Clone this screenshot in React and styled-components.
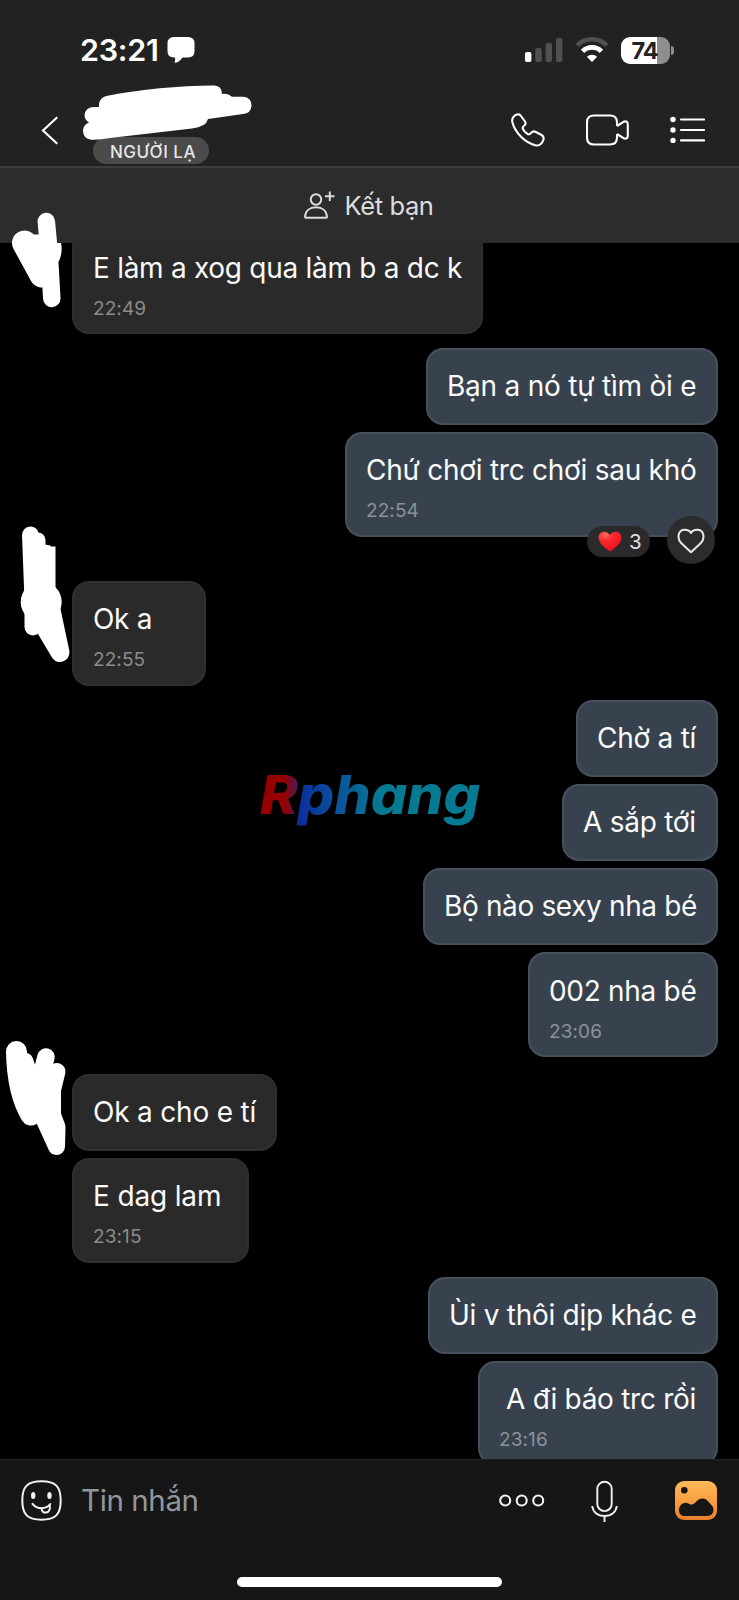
import React from "react";
import styled, { createGlobalStyle } from "styled-components";

const GlobalStyle = createGlobalStyle`
  * {
    box-sizing: border-box;
  }

  body {
    margin: 0;
    background: #000;
    font-family: Inter, "Liberation Sans", sans-serif;
  }

  svg {
    display: block;
    flex: none;
  }
`;

const Screen = styled.div`
  position: relative;
  display: flex;
  flex-direction: column;
  width: 739px;
  height: 1600px;
  overflow: hidden;
  background: #000;
`;

const Header = styled.header`
  display: flex;
  flex-direction: column;
  flex: none;
  height: 168px;
  background: #222;
  border-bottom: 2px solid #3e3e3e;
`;

const StatusBar = styled.div`
  display: flex;
  align-items: center;
  justify-content: space-between;
  height: 100px;
  padding: 0 65px 0 80px;
`;

const StatusGroup = styled.div`
  display: flex;
  align-items: center;
  gap: ${({ $gap }) => $gap}px;
`;

const Clock = styled.span`
  font-size: 30.5px;
  font-weight: 600;
  line-height: 36px;
  letter-spacing: -0.3px;
  color: #fff;
`;

const Battery = styled.div`
  display: flex;
  align-items: center;
  gap: 1px;
`;

const BatteryBody = styled.div`
  display: flex;
  align-items: center;
  justify-content: center;
  width: 49px;
  height: 27px;
  padding-right: 2px;
  border-radius: 9px;
  background: linear-gradient(90deg, #fff 74%, #8e8e8e 74%);
  color: #222;
  font-size: 23.5px;
  font-weight: 700;
  letter-spacing: -1px;
`;

const BatteryCap = styled.div`
  width: 3px;
  height: 9px;
  border-radius: 0 4px 4px 0;
  background: #8e8e8e;
`;

const TitleBar = styled.div`
  display: flex;
  align-items: flex-start;
  padding: 12px 34px 0 41px;
`;

const BackButton = styled.button`
  margin: 4px 0 0;
  padding: 0;
  border: 0;
  background: none;
`;

const StrangerTag = styled.span`
  width: 116px;
  height: 27px;
  margin: 25px 0 0 35px;
  padding: 0 0 0 17px;
  border-radius: 14px;
  background: #4b4b4b;
  color: #e6e6e6;
  font-size: 17px;
  font-weight: 500;
  line-height: 30px;
  letter-spacing: 0.5px;
  white-space: nowrap;
`;

const HeaderActions = styled.div`
  display: flex;
  align-items: center;
  gap: 41px;
  height: 36px;
  margin-left: auto;
`;

const FriendBanner = styled.div`
  display: flex;
  flex: none;
  align-items: center;
  justify-content: center;
  gap: 10px;
  height: 75px;
  padding-right: 2px;
  background: #2c2c2c;
  color: #dcdcdc;
  font-size: 25.5px;
  letter-spacing: -0.4px;
`;

const Thread = styled.main`
  display: flex;
  flex: 1;
  flex-direction: column;
  min-height: 0;
  overflow: hidden;
  padding: 0 21px 0 72px;
`;

const Group = styled.section`
  display: flex;
  flex: none;
  flex-direction: column;
  gap: 7.2px;
  align-items: ${({ $mine }) => ($mine ? "flex-end" : "flex-start")};
  margin-top: ${({ $top }) => $top}px;
`;

const Bubble = styled.article`
  position: relative;
  flex: none;
  width: ${({ $width }) => $width}px;
  height: ${({ $timed }) => ($timed ? 104.6 : 77)}px;
  padding: 19.2px 0 0 ${({ $indent }) => 19 + ($indent || 0)}px;
  border: 2px solid ${({ $mine }) => ($mine ? "#47515d" : "#2f2f2f")};
  border-radius: 17px;
  background: ${({ $mine }) => ($mine ? "#37424e" : "#2a2a2a")};
`;

const Message = styled.p`
  margin: 0;
  color: #fafafa;
  font-size: 28px;
  line-height: 34px;
  letter-spacing: ${({ $track }) => $track || 0}px;
  white-space: nowrap;
`;

const Time = styled.time`
  display: block;
  margin: 12px 0 0 ${({ $indent }) => -($indent || 0)}px;
  color: ${({ $mine }) => ($mine ? "#8b929b" : "#8c8c8c")};
  font-size: 19px;
  line-height: 24px;
  letter-spacing: 0.1px;
`;

const Reactions = styled.div`
  position: absolute;
  right: 1px;
  bottom: -29px;
  display: flex;
  align-items: center;
  gap: 17px;
`;

const ReactionCount = styled.div`
  display: flex;
  align-items: center;
  gap: 7px;
  width: 63px;
  height: 31px;
  margin-top: 4px;
  padding-left: 11px;
  border-radius: 16px;
  background: #2a2a2a;
  color: #e0e0e0;
  font-size: 20.5px;
`;

const ReactButton = styled.button`
  display: flex;
  align-items: center;
  justify-content: center;
  width: 48px;
  height: 48px;
  padding: 3px 0 0;
  border: 0;
  border-radius: 50%;
  background: #2c2c2c;
`;

const Composer = styled.footer`
  display: flex;
  flex: none;
  flex-direction: column;
  align-items: center;
  justify-content: space-between;
  height: 141px;
  padding-bottom: 13px;
  background: #161616;
  border-top: 1px solid #202020;
`;

const ComposerRow = styled.div`
  display: flex;
  align-items: center;
  width: 100%;
  height: 81px;
  padding: 0 22px 0 21px;
`;

const Placeholder = styled.span`
  margin: 0 0 2px 19px;
  color: #90989e;
  font-size: 29.5px;
  letter-spacing: -0.4px;
`;

const ComposerActions = styled.div`
  display: flex;
  align-items: center;
  margin-left: auto;
`;

const MicSlot = styled.span`
  margin: 0 57px 0 46px;
`;

const HomeIndicator = styled.div`
  width: 265px;
  height: 10px;
  border-radius: 5px;
  background: #fff;
`;

const Overlay = styled.svg`
  position: absolute;
  top: 0;
  left: 0;
  pointer-events: none;
`;

const groups = [
  {
    top: -13.4,
    items: [{ text: "E làm a xog qua làm b a dc k", width: 411, time: "22:49", track: -0.28 }],
  },
  {
    mine: true,
    top: 13.8,
    items: [
      { text: "Bạn a nó tự tìm òi e", width: 292, track: -0.22 },
      { text: "Chứ chơi trc chơi sau khó", width: 373, time: "22:54", reactions: 3, track: -0.25 },
    ],
  },
  { top: 44.4, items: [{ text: "Ok a", width: 134, time: "22:55", track: -0.3 }] },
  {
    mine: true,
    top: 14,
    items: [
      { text: "Chờ a tí", width: 142, track: -0.25 },
      { text: "A sắp tới", width: 156, track: -0.25 },
      { text: "Bộ nào sexy nha bé", width: 295, track: -0.36 },
      { text: "002 nha bé", width: 190, time: "23:06", track: -0.3 },
    ],
  },
  {
    top: 17,
    items: [
      { text: "Ok a cho e tí", width: 205, track: -0.2 },
      { text: "E dag lam", width: 177, time: "23:15", track: -0.15 },
    ],
  },
  {
    mine: true,
    top: 14,
    items: [
      { text: "Ùi v thôi dịp khác e", width: 290, track: -0.27 },
      { text: "A đi báo trc rồi", width: 240, time: "23:16", indent: 7, track: -0.28 },
    ],
  },
];

const SpeechIcon = () => (
  <svg width="28" height="28" viewBox="0 0 28 28" fill="#fff">
    <path d="M7 1h14q6.500 0 6.500 6.500v7.500q0 6.500-6.500 6.500h-5.500q-3 4.500-7 5.300-1.200 0-.8-1.200.8-1.800.3-4.100H7Q.5 21.500.5 15V7.500Q.5 1 7 1Z" />
  </svg>
);

const SignalIcon = () => (
  <svg width="38" height="26" viewBox="0 0 38 26" fill="#505050">
    <rect x="0" y="15" width="6.400" height="10" rx="1.800" fill="#fff" />
    <rect x="10.300" y="11" width="6.400" height="14" rx="1.800" />
    <rect x="20.600" y="6" width="6.400" height="19" rx="1.800" />
    <rect x="31" y="1" width="6.400" height="24" rx="1.800" />
  </svg>
);

const WifiIcon = () => (
  <svg width="34" height="26" viewBox="0 0 34 26" fill="none" strokeWidth="4.600">
    <path d="M2.200 8.400a21 21 0 0 1 29.600 0" stroke="#505050" />
    <path d="M7.600 14.300a13.200 13.200 0 0 1 18.800 0" stroke="#fff" />
    <path d="M17 25l-5.200-5.200a7.500 7.500 0 0 1 10.400 0Z" fill="#fff" />
  </svg>
);

const PhoneIcon = () => (
  <svg width="34" height="34" viewBox="0 0 34 34" fill="none" stroke="#fff" strokeWidth="2.100" strokeLinejoin="round">
    <path d="M2.300 4.200C4.300 1.600 7.600.300 9.600 2.500L14 8.500Q15.200 10.400 13.800 12Q11.600 13.600 11.600 15.200Q12.600 18.500 17.300 21.300Q18.900 21.600 20.400 19.700Q22 17.600 24.400 18.800L30.600 22Q33.200 23.700 32.500 26.500C30.800 31.500 27.700 33 24.300 32.300C14.500 29.500 4.300 20.500 1.400 9.300Q.700 6.300 2.300 4.200Z" />
  </svg>
);

const VideoIcon = () => (
  <svg width="43" height="32" viewBox="0 0 43 32" fill="none" stroke="#fff" strokeWidth="2.100" strokeLinejoin="round">
    <path d="M31 12V8.500q0-7-7-7H8q-7 0-7 7v15q0 7 7 7h16q7 0 7-7V20" />
    <path d="M31 12l6.500-4.200q4.300-1.600 4.300 2.800v10.800q0 4.400-4.300 2.800L31 20" />
  </svg>
);

const ListIcon = () => (
  <svg width="35" height="28" viewBox="0 0 35 28" fill="#fff">
    <circle cx="3" cy="3.500" r="2.700" />
    <circle cx="3" cy="14" r="2.700" />
    <circle cx="3" cy="24.400" r="2.700" />
    <path d="M11 3.500h23M11 14h23M11 24.400h23" stroke="#fff" strokeWidth="2.200" strokeLinecap="round" />
  </svg>
);

const AddFriendIcon = () => (
  <svg width="31" height="30" viewBox="0 0 31 30" fill="none" stroke="#dcdcdc" strokeWidth="2" strokeLinejoin="round">
    <circle cx="12" cy="8.500" r="5.200" />
    <path d="M1 25.700C1.500 19.500 6 16.300 12 16.300S22.500 19.500 23 25.700Q23 26.700 22 26.700H2Q1 26.700 1 25.700Z" />
    <path d="M21 5.300h9.500M25.800.500v9.600" />
  </svg>
);

const RedHeart = () => (
  <svg width="24" height="21" viewBox="0 0 24 21">
    <defs>
      <radialGradient id="heart" cx="0.3" cy="0.15" r="0.8">
        <stop offset="0" stopColor="#ff6a63" />
        <stop offset="0.4" stopColor="#fb2a2c" />
        <stop offset="1" stopColor="#ea1220" />
      </radialGradient>
    </defs>
    <path d="M12 20.500C8 18 .5 12.500.5 6.500C.5 3 3 .700 6.200.700C9 .700 11.200 2.200 12 4.500C12.800 2.200 15 .700 17.800.700C21 .700 23.500 3 23.500 6.500C23.500 12.500 16 18 12 20.500Z" fill="url(#heart)" />
  </svg>
);

const OutlineHeart = () => (
  <svg width="28" height="26" viewBox="0 0 28 26" fill="none" stroke="#e8e8e8" strokeWidth="2" strokeLinejoin="round">
    <path d="M14 24.200L4.400 15.200C-.5 10.300 1 1.800 7.700 1.800C10.700 1.800 13 3 14 5C15 3 17.300 1.800 20.300 1.800C27 1.800 28.500 10.300 23.600 15.200Z" />
  </svg>
);

const StickerIcon = () => (
  <svg width="41" height="41" viewBox="0 0 41 41" fill="none" stroke="#f2f2f2" strokeWidth="2" strokeLinecap="round">
    <path d="M20.500 1.300C34.500 1.300 39.700 6.500 39.700 20.500S34.500 39.700 20.500 39.700S1.300 34.500 1.300 20.500S6.500 1.300 20.500 1.300Z" />
    <ellipse cx="12.200" cy="15.500" rx="2.200" ry="3.600" fill="#f2f2f2" stroke="none" />
    <ellipse cx="28.500" cy="15.500" rx="2.200" ry="3.600" fill="#f2f2f2" stroke="none" />
    <path d="M11.500 23.800Q15 28.200 20.500 28.200Q26 28.200 29.300 24" />
    <path d="M20.600 28.200C20.800 31.500 22.500 32.800 25 32.600C28.300 32.200 29.500 29 28.600 25" />
  </svg>
);

const MoreIcon = () => (
  <svg width="46" height="14" viewBox="0 0 46 14" fill="none" stroke="#f2f2f2" strokeWidth="2.100">
    <circle cx="6.200" cy="6.500" r="5" />
    <circle cx="22.700" cy="6.500" r="5" />
    <circle cx="39.200" cy="6.500" r="5" />
  </svg>
);

const MicIcon = () => (
  <svg width="27" height="42" viewBox="0 0 27 42" fill="none" stroke="#f2f2f2" strokeWidth="1.900">
    <rect x="6.300" y="1.800" width="14.400" height="29.300" rx="7.200" />
    <path d="M1.200 26C1.800 32 6.500 36 13.500 36S25.200 32 25.800 26M13.500 36v6" />
  </svg>
);

const PhotoIcon = () => (
  <svg width="42" height="39" viewBox="0 0 42 39">
    <defs>
      <linearGradient id="photo" x1="0" y1="0" x2="0" y2="1">
        <stop offset="0" stopColor="#ffb95a" />
        <stop offset="0.6" stopColor="#f79a3c" />
        <stop offset="1" stopColor="#e87d2c" />
      </linearGradient>
    </defs>
    <rect width="42" height="39" rx="9" fill="url(#photo)" />
    <circle cx="9.300" cy="9.300" r="3.300" fill="#161616" />
    <path d="M4 29C4 25 7 22 10.500 21.800C13.500 21.800 14.500 24 17 23.600C20 23 22.500 17.500 27.500 17.500C31.500 17.500 33 20.500 35.500 23C37.500 25 38.500 26.500 38.500 28.500Q38.500 35 32 35H10Q4 35 4 29Z" fill="#161616" />
  </svg>
);

// thick round strokes that cover the name and the avatars
const Scribbles = () => (
  <Overlay width="739" height="1200" viewBox="0 0 739 1200" fill="none" stroke="#fff" strokeLinecap="round" strokeLinejoin="round">
    <path d="M99 107Q98 97 109 95.500C140 89.500 178 86 214 85.600Q222 86 222 94Q228 93 232 96.700H243Q251.500 97.500 251.500 105.500Q251 113.500 243 114L208 119Q206 127 192 128.500L110 138Q100 140 91 139.700Q83 138.500 83 130.500Q83.500 124.500 89 122.500Q84.500 120 84.500 115Q85.500 107.500 93 107Z" fill="#fff" stroke="none" />

    <path d="M46.300 221.500L49 250L51.800 298.500" strokeWidth="17.500" />
    <path d="M24.500 243L42 275" strokeWidth="25" />
    <path d="M30 235H46V270H36Z" fill="#fff" />
    <path d="M48 243H61Q63 252 59 261L50 268Z" fill="#fff" stroke="none" />

    <path d="M30.500 535L33 600V627" strokeWidth="17" />
    <path d="M38 540V600" strokeWidth="15" />
    <path d="M38 545.500Q50 543.500 51 546.500H55.500V600H38Z" fill="#fff" stroke="none" />
    <circle cx="41.200" cy="602" r="20.500" fill="#fff" stroke="none" />
    <path d="M51 610L60 652.500L46 629Z" strokeWidth="19" />

    <path d="M16.500 1051.500C17 1080 22 1100 31 1115" strokeWidth="21" />
    <path d="M26 1060L38 1095" strokeWidth="14" />
    <path d="M46 1057L40 1080" strokeWidth="17.500" />
    <path d="M57 1071.500L52.500 1090V1115L57 1127L56.500 1146.500L44 1119" strokeWidth="17" />
    <path d="M20 1065L36 1075L55 1078V1120L45 1122L30 1115Z" fill="#fff" />
  </Overlay>
);

// site watermark laid over the conversation
const Watermark = () => (
  <Overlay width="739" height="900" viewBox="0 0 739 900">
    <defs>
      <linearGradient id="brand" gradientUnits="userSpaceOnUse" x1="260" y1="0" x2="480" y2="0">
        <stop offset="0.11" stopColor="#960000" />
        <stop offset="0.16" stopColor="#5c1440" />
        <stop offset="0.18" stopColor="#0a2f9e" />
        <stop offset="0.35" stopColor="#0a5299" />
        <stop offset="0.55" stopColor="#067a93" />
        <stop offset="1" stopColor="#067a93" />
      </linearGradient>
    </defs>
    <text x="260" y="814" textLength="220" lengthAdjust="spacingAndGlyphs" fontFamily="Inter, sans-serif" fontSize="54" fontWeight="800" fontStyle="italic" fill="url(#brand)">
      Rphang
    </text>
  </Overlay>
);

const ChatBubble = ({ mine, item }) => (
  <Bubble $mine={mine} $width={item.width} $timed={!!item.time} $indent={item.indent}>
    <Message $track={item.track}>{item.text}</Message>
    {item.time && (
      <Time $mine={mine} $indent={item.indent}>
        {item.time}
      </Time>
    )}
    {item.reactions && (
      <Reactions>
        <ReactionCount>
          <RedHeart />
          {item.reactions}
        </ReactionCount>
        <ReactButton aria-label="Thích">
          <OutlineHeart />
        </ReactButton>
      </Reactions>
    )}
  </Bubble>
);

const App = () => {
  return (
    <>
      <GlobalStyle />
      <Screen>
        <Header>
          <StatusBar>
            <StatusGroup $gap={8}>
              <Clock>23:21</Clock>
              <SpeechIcon />
            </StatusGroup>
            <StatusGroup $gap={12}>
              <SignalIcon />
              <WifiIcon />
              <Battery>
                <BatteryBody>74</BatteryBody>
                <BatteryCap />
              </Battery>
            </StatusGroup>
          </StatusBar>
          <TitleBar>
            <BackButton aria-label="Quay lại">
              <svg width="17" height="29" viewBox="0 0 17 29" fill="none" stroke="#fff" strokeWidth="2.200">
                <path d="M16.300 1.200L2 14.500L16.300 27.800" />
              </svg>
            </BackButton>
            <StrangerTag>NGƯỜI LẠ</StrangerTag>
            <HeaderActions>
              <PhoneIcon />
              <VideoIcon />
              <ListIcon />
            </HeaderActions>
          </TitleBar>
        </Header>

        <FriendBanner>
          <AddFriendIcon />
          <span>Kết bạn</span>
        </FriendBanner>

        <Thread>
          {groups.map((group, i) => (
            <Group key={i} $mine={group.mine} $top={group.top}>
              {group.items.map((item) => (
                <ChatBubble key={item.text} mine={group.mine} item={item} />
              ))}
            </Group>
          ))}
        </Thread>

        <Composer>
          <ComposerRow>
            <StickerIcon />
            <Placeholder>Tin nhắn</Placeholder>
            <ComposerActions>
              <MoreIcon />
              <MicSlot>
                <MicIcon />
              </MicSlot>
              <PhotoIcon />
            </ComposerActions>
          </ComposerRow>
          <HomeIndicator />
        </Composer>

        <Scribbles />
        <Watermark />
      </Screen>
    </>
  );
};

export default App;
